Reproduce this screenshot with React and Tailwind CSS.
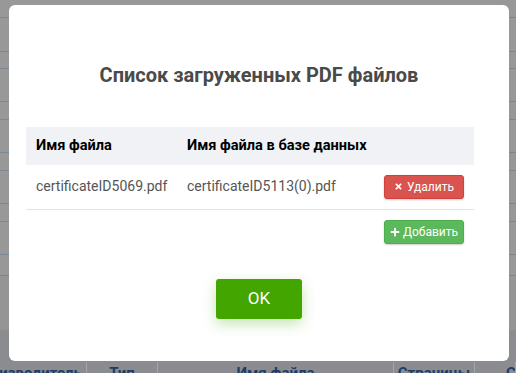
import React from 'react';
import { FaTimes, FaPlus } from 'react-icons/fa';

const files = [{ name: 'certificateID5069.pdf', dbName: 'certificateID5113(0).pdf' }];

const bgRows = [18, 34, 17, 33, 18, 33, 18, 33, 18, 33, 21];

const bottomCols = [
  { label: 'Производитель', w: 'w-[87px] shrink-0', align: 'justify-end pr-1' },
  { label: 'Тип', w: 'w-[71px] shrink-0', align: 'justify-center' },
  { label: 'Имя файла', w: 'w-[236px] shrink-0', align: 'justify-center' },
  { label: 'Страницы', w: 'w-[81px] shrink-0', align: 'justify-center' },
  { label: 'Статус', w: 'flex-1 min-w-0 overflow-hidden', align: 'justify-start pl-[31px]' },
];

const App = () => {
  return (
    <div className="relative w-[516px] h-[373px] overflow-hidden bg-[#989898] font-['Roboto',sans-serif]">
      {/* page behind the backdrop */}
      <div className="flex flex-col">
        {bgRows.map((h, i) => (
          <div key={i} className="border-b border-[#7a8796]" style={{ height: h }} />
        ))}
        <div className="h-[54px] bg-[#959595]" />
        <div className="h-[43px] bg-[#8a8c90] flex items-end">
          {bottomCols.map((c) => (
            <div
              key={c.label}
              className={`${c.w} h-[11px] flex ${c.align} border-r border-[#a3a5a9] text-[15px] leading-[18px] font-bold text-[#1d3d66] whitespace-nowrap`}
            >
              <span className="mt-[2px]">{c.label}</span>
            </div>
          ))}
        </div>
      </div>

      {/* modal */}
      <div className="absolute left-[9px] top-[5px] w-[500px] h-[356px] bg-white rounded-md flex flex-col">
        <h2 className="mt-[58px] text-center text-[20px] leading-[24px] font-bold text-[#4a4a4a]">
          Список загруженных PDF файлов
        </h2>

        <table className="mt-[40px] ml-[17px] w-[448px] text-[14px] border-collapse">
          <thead>
            <tr className="bg-[#f0f2f6] h-[38px]">
              <th className="w-[151px] pl-[10px] text-left text-[14.6px] font-bold text-black">Имя файла</th>
              <th className="w-[197px] pl-[10px] text-left text-[14.6px] font-bold text-black">Имя файла в базе данных</th>
              <th />
            </tr>
          </thead>
          <tbody>
            {files.map((f) => (
              <tr key={f.name} className="h-[44px] border-b border-[#e3e3e3]">
                <td className="pl-[10px] text-[#555]">{f.name}</td>
                <td className="pl-[10px] text-[#555]">{f.dbName}</td>
                <td className="pl-[10px]">
                  <button className="w-[80px] h-[24px] rounded-[3px] bg-[#d9534f] border border-[#d43f3a] text-white text-[12px] flex items-center justify-center gap-[4px] shadow-[0_1px_2px_rgba(0,0,0,0.2)]">
                    <FaTimes className="w-[9px] h-[9px]" />
                    Удалить
                  </button>
                </td>
              </tr>
            ))}
            <tr className="h-[45px]">
              <td />
              <td />
              <td className="pl-[10px] align-middle">
                <button className="w-[80px] h-[24px] rounded-[3px] bg-[#5cb85c] border border-[#4cae4c] text-white text-[12px] flex items-center justify-center gap-[3px] shadow-[0_1px_2px_rgba(0,0,0,0.2)]">
                  <FaPlus className="w-[10px] h-[10px]" />
                  Добавить
                </button>
              </td>
            </tr>
          </tbody>
        </table>

        <div className="mt-[25px] flex justify-center">
          <button className="w-[86px] h-[40px] rounded-[3px] bg-[#43a500] text-white text-[17px] shadow-[0_5px_14px_rgba(67,165,0,0.3)]">
            OK
          </button>
        </div>
      </div>
    </div>
  );
};

export default App;
